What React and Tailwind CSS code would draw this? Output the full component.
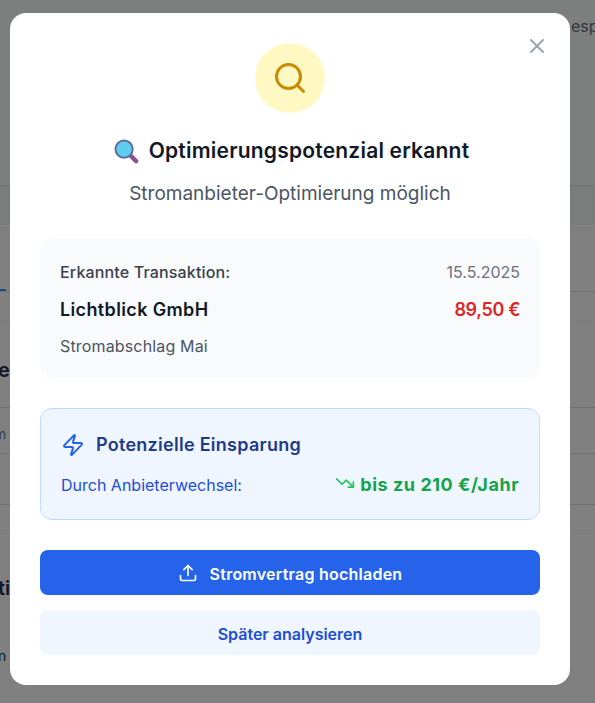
import React from "react";
import { Search, X, Zap, TrendingDown, Upload } from "lucide-react";

const Row = ({ className = "", faint, children }) => (
  <div className={`flex items-end border-b ${faint ? "border-[#7a7b7b]" : "border-[#6e6f70]"} ${className}`}>
    {children}
  </div>
);

const App = () => {
  return (
    <div className="relative h-[703px] w-[595px] overflow-hidden bg-[#808080] font-['Inter','Liberation_Sans',sans-serif]">
      <div className="flex flex-col overflow-hidden whitespace-nowrap text-[#111827]">
        <Row className="h-[186px] bg-[#7d7e7e]">
          <span className="mb-[147px] ml-[571px] text-base leading-6 text-[#33363c]">esp</span>
        </Row>
        <Row faint className="h-[39px] bg-[#7b7c7c]" />
        <Row className="h-[67px]">
          <div className="h-[2px] w-[6px] bg-[#1d4a8c]" />
        </Row>
        <Row faint className="h-[30px]" />
        <Row className="h-[86px]">
          <span className="mb-[23px] -ml-[2px] text-[20px] font-semibold leading-7">e</span>
        </Row>
        <Row className="h-[46px]">
          <span className="mb-[9px] -ml-[6px] text-sm leading-5 text-[#374151]">m</span>
        </Row>
        <Row className="h-[51px]" />
        <Row faint className="h-[29px]" />
        <div className="mt-[40px] -ml-[2px] text-[20px] font-semibold leading-7">ti</div>
        <div className="mt-[44px] -ml-[2px] text-sm leading-5">n</div>
      </div>

      <div className="absolute inset-0 flex items-start justify-start pl-[10px] pt-[13px]">
        <div className="relative h-[672px] w-[560px] rounded-2xl bg-white p-[30px]">
          <button className="absolute right-[21px] top-[21px] text-[#9ca3af]">
            <X size={24} />
          </button>

          <div className="flex flex-col items-center">
            <div className="flex h-[70px] w-[70px] items-center justify-center rounded-full bg-[#fef9c3]">
              <Search size={36} strokeWidth={2} className="text-[#ca8a04]" />
            </div>
            <h2 className="mt-6 ml-[3px] flex items-center gap-[10px] text-[21px] font-semibold leading-7 tracking-[0.01em] text-[#111827]">
              <svg width="25" height="25" viewBox="0 0 26 26">
                <path d="M16 16l7 7" stroke="#8a4f94" strokeWidth="4.5" strokeLinecap="round" />
                <circle cx="10.5" cy="10.5" r="9" fill="#5fcdf0" stroke="#5f6d9b" strokeWidth="2" />
              </svg>
              Optimierungspotenzial erkannt
            </h2>
            <p className="mt-[15px] text-[19px] leading-7 text-[#4b5563]">Stromanbieter-Optimierung möglich</p>
          </div>

          <div className="mt-[30px] h-[140px] rounded-xl bg-[#f9fafb] p-5">
            <div className="flex items-center justify-between">
              <span className="text-base font-medium leading-7 tracking-[0.01em] text-[#374151]">Erkannte Transaktion:</span>
              <span className="text-base leading-7 text-[#6b7280]">15.5.2025</span>
            </div>
            <div className="mt-[10px] flex items-center justify-between">
              <span className="text-lg font-semibold leading-7 tracking-[0.02em] text-[#111827]">Lichtblick GmbH</span>
              <span className="text-lg font-semibold leading-7 tracking-[-0.02em] text-[#dc2626]">89,50 €</span>
            </div>
            <p className="mt-[10px] text-base leading-6 tracking-[0.01em] text-[#4b5563]">Stromabschlag Mai</p>
          </div>

          <div className="mt-[30px] h-[112px] rounded-xl border border-[#bfdbfe] bg-[#eff6ff] px-5 pt-[22px]">
            <div className="flex items-center gap-[11px]">
              <Zap size={24} className="text-[#2563eb]" />
              <span className="text-lg font-semibold leading-7 tracking-[0.015em] text-[#1e3a8a]">Potenzielle Einsparung</span>
            </div>
            <div className="mt-3 flex items-center justify-between">
              <span className="text-base leading-6 text-[#1d4ed8]">Durch Anbieterwechsel:</span>
              <span className="flex items-center gap-[5px] text-lg font-bold leading-7 tracking-[0.03em] text-[#16a34a]">
                <TrendingDown size={20} className="-mt-1 text-[#22c55e]" />
                bis zu 210 €/Jahr
              </span>
            </div>
          </div>

          <button className="mt-[30px] flex h-[45px] w-full items-center justify-center gap-3 rounded-lg bg-[#2563eb] text-base font-semibold tracking-[0.015em] text-white">
            <Upload size={20} />
            <span className="pt-[3px]">Stromvertrag hochladen</span>
          </button>
          <button className="mt-[15px] flex h-[45px] w-full items-center justify-center rounded-lg bg-[#eff6ff] pt-[3px] text-base font-semibold text-[#1d4ed8]">
            Später analysieren
          </button>
        </div>
      </div>
    </div>
  );
};

export default App;
